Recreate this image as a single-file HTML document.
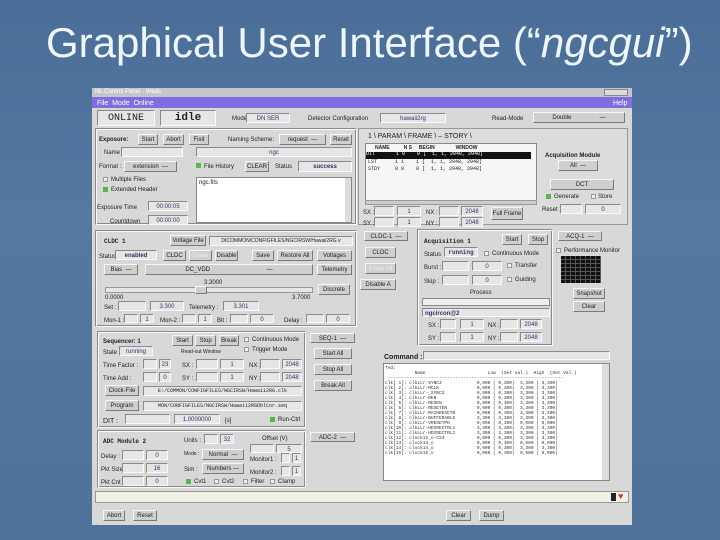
<!DOCTYPE html>
<html><head><meta charset="utf-8"><style>
*{margin:0;padding:0;box-sizing:border-box}
body{width:720px;height:540px;overflow:hidden;background:linear-gradient(180deg,#4a6e97 0%,#5478a0 40%,#4e7299 100%);font-family:"Liberation Sans",sans-serif;position:relative}
h1{position:absolute;left:46px;top:19px;color:#eef6ff;font-weight:normal;font-size:42px;letter-spacing:0px;white-space:nowrap}
#w{position:absolute;left:92px;top:88px;width:540px;height:437px;background:#d8d8d8}
#w div{position:absolute;font-size:6px;line-height:1;white-space:nowrap;color:#222}
.b{background:#cfcfcf;border:1px solid;border-color:#f6f6f6 #7a7a7a #7a7a7a #f6f6f6;text-align:center;padding-top:2px}
.f{background:#e6e6e6;border:1px solid;border-color:#8a8a8a #fafafa #fafafa #8a8a8a;text-align:center;padding-top:2px;color:#336!important}
.p{border:1px solid;border-color:#8a8a8a #fafafa #fafafa #8a8a8a;box-shadow:inset 1px 1px 0 #fafafa,inset -1px -1px 0 #8a8a8a}
.g{background:#55b84a;width:5px;height:5px}
.c{background:#eee;border:1px solid #999;width:5px;height:5px}
.mono{font-family:"Liberation Mono",monospace}
</style></head><body>
<h1>Graphical User Interface (“<i>ngcgui</i>”)</h1>
<div id="w">
<div style="left:0;top:0;width:540px;height:9px;background:#c4c6cc"></div>
<div style="left:3px;top:1px;color:#fff;font-size:6px">NL Control Panel · Weds</div>
<div style="left:512px;top:1px;width:24px;height:7px;background:#ddd;border:1px solid #888"></div>
<div style="left:0;top:9px;width:540px;height:11px;background:#7e6ee0"></div>
<div style="left:5px;top:12px;color:#fff;font-size:7px">File &nbsp;Mode &nbsp;Online</div>
<div style="left:521px;top:12px;color:#fff;font-size:7px">Help</div>
<div class="f mono" style="left:5px;top:22px;width:58px;height:16px;font-size:10px;color:#222!important;padding-top:3px">ONLINE</div>
<div class="f mono" style="left:68px;top:22px;width:56px;height:16px;font-size:11px;color:#222!important;padding-top:2px;font-weight:bold">idle</div>
<div style="left:140px;top:28px">Mode</div>
<div class="f" style="left:154px;top:25px;width:44px;height:10px">DN SER</div>
<div style="left:216px;top:28px">Detector Configuration</div>
<div class="f" style="left:288px;top:25px;width:66px;height:10px">hawaii2rg</div>
<div style="left:400px;top:28px">Read-Mode</div>
<div class="b" style="left:441px;top:24px;width:92px;height:11px">Double &nbsp; &nbsp; &nbsp; &nbsp; &nbsp; &nbsp; &nbsp; &nbsp; — </div>

<div class="p" style="left:3px;top:40px;width:262px;height:97px"></div>
<div style="left:7px;top:49px;font-weight:bold">Exposure:</div>
<div class="b" style="left:46px;top:46px;width:20px;height:11px">Start</div>
<div class="b" style="left:71px;top:46px;width:21px;height:11px">Abort</div>
<div class="b" style="left:97px;top:46px;width:20px;height:11px">Fixit</div>
<div style="left:136px;top:49px">Naming Scheme:</div>
<div class="b" style="left:187px;top:46px;width:47px;height:11px">request &nbsp;—</div>
<div class="b" style="left:238px;top:46px;width:22px;height:11px">Reset</div>
<div style="left:12px;top:62px">Name :</div>
<div class="f" style="left:29px;top:59px;width:62px;height:10px"></div>
<div class="f" style="left:104px;top:59px;width:156px;height:10px">ngc</div>
<div style="left:7px;top:76px">Format :</div>
<div class="b" style="left:32px;top:73px;width:53px;height:11px">extension &nbsp;—</div>
<div class="g" style="left:104px;top:75px"></div>
<div style="left:112px;top:76px">File History</div>
<div class="b" style="left:153px;top:73px;width:24px;height:11px">CLEAR</div>
<div style="left:183px;top:76px">Status</div>
<div class="f" style="left:206px;top:73px;width:54px;height:11px;font-weight:bold">success</div>
<div class="c" style="left:11px;top:89px"></div><div style="left:19px;top:89px">Multiple Files</div>
<div class="g" style="left:11px;top:99px"></div><div style="left:19px;top:99px">Extended Header</div>
<div style="left:5px;top:117px">Exposure Time</div>
<div class="f" style="left:56px;top:113px;width:40px;height:10px">00:00:05</div>
<div style="left:18px;top:131px">Countdown</div>
<div class="f" style="left:56px;top:127px;width:40px;height:10px">00:00:00</div>
<div style="left:104px;top:89px;width:156px;height:46px;background:#fff;border:1px solid #888"></div>
<div style="left:107px;top:92px">ngc.fits</div>
<div style="left:253px;top:90px;width:6px;height:44px;background:#ddd"></div>

<div style="left:266px;top:40px;width:270px;height:97px;background:#dcdcdc;border:1px solid #999"></div>
<div style="left:276px;top:45px;font-size:7px">1 \ PARAM \ FRAME \ – STORY \</div>
<div style="left:273px;top:55px;width:172px;height:61px;background:#f6f6f6;border:1px solid #888"></div>
<div style="left:283px;top:58px;font-size:5px;font-weight:bold">NAME &nbsp; &nbsp; &nbsp; &nbsp; &nbsp;N S &nbsp; &nbsp; BEGIN &nbsp; &nbsp; &nbsp; &nbsp; &nbsp; &nbsp; &nbsp; WINDOW</div>
<div class="mono" style="left:274px;top:64px;width:165px;height:7px;background:#111;color:#fff;font-size:5px">DIT &nbsp; &nbsp; &nbsp; 1 0 &nbsp; &nbsp;0 [ &nbsp;1, 1, 2048, 2048]</div>
<div class="mono" style="left:276px;top:72px;font-size:5px">LST &nbsp; &nbsp; &nbsp;1 1 &nbsp; &nbsp;1 [ &nbsp;1, 1, 2048, 2048]</div>
<div class="mono" style="left:276px;top:79px;font-size:5px">STDY &nbsp; &nbsp; 0 0 &nbsp; &nbsp;0 [ &nbsp;1, 1, 2048, 2048]</div>
<div style="left:273px;top:112px;width:172px;height:5px;background:#ccc;border:1px solid #999"></div>
<div style="left:271px;top:122px">SX :</div><div class="f" style="left:282px;top:118px;width:20px;height:10px"></div><div class="f" style="left:305px;top:118px;width:24px;height:10px">1</div>
<div style="left:271px;top:133px">SY :</div><div class="f" style="left:282px;top:129px;width:20px;height:10px"></div><div class="f" style="left:305px;top:129px;width:24px;height:10px">1</div>
<div style="left:334px;top:122px">NX :</div><div class="f" style="left:347px;top:118px;width:20px;height:10px"></div><div class="f" style="left:369px;top:118px;width:22px;height:10px">2048</div>
<div style="left:334px;top:133px">NY :</div><div class="f" style="left:347px;top:129px;width:20px;height:10px"></div><div class="f" style="left:369px;top:129px;width:22px;height:10px">2048</div>
<div class="b" style="left:399px;top:119px;width:32px;height:13px;padding-top:3px">Full Frame</div>
<div style="left:453px;top:65px;font-weight:bold;font-size:6px">Acquisition Module</div>
<div class="b" style="left:466px;top:72px;width:40px;height:11px">All &nbsp;—</div>
<div class="b" style="left:458px;top:91px;width:64px;height:11px">DCT</div>
<div class="g" style="left:454px;top:106px"></div><div style="left:462px;top:106px">Generate</div>
<div class="c" style="left:499px;top:106px"></div><div style="left:506px;top:106px">Store</div>
<div style="left:450px;top:119px">Reset :</div><div class="f" style="left:468px;top:116px;width:22px;height:10px"></div><div class="f" style="left:493px;top:116px;width:36px;height:10px">0</div>

<div class="p" style="left:3px;top:142px;width:262px;height:97px"></div>
<div style="left:12px;top:151px;font-weight:bold" class="mono">CLDC 1</div>
<div class="b" style="left:78px;top:147px;width:36px;height:11px">Voltage File</div>
<div class="f" style="left:117px;top:148px;width:144px;height:10px;font-size:5px;color:#222!important">DICOMMON/CONFIGFILES/NGCIRSW/Hawaii2RG.v</div>
<div style="left:7px;top:166px">Status</div>
<div class="f" style="left:23px;top:162px;width:42px;height:10px;font-weight:bold" >enabled</div>
<div class="b" style="left:71px;top:162px;width:23px;height:11px">CLDC</div>
<div class="b" style="left:97px;top:162px;width:23px;height:11px;color:#eee">Erase</div>
<div class="b" style="left:123px;top:162px;width:23px;height:11px">Disable</div>
<div class="b" style="left:160px;top:162px;width:22px;height:11px">Save</div>
<div class="b" style="left:185px;top:162px;width:36px;height:11px">Restore All</div>
<div class="b" style="left:225px;top:162px;width:35px;height:11px">Voltages</div>
<div class="b" style="left:12px;top:176px;width:34px;height:11px">Bias &nbsp;—</div>
<div class="b" style="left:53px;top:176px;width:168px;height:11px">DC_VDD &nbsp; &nbsp; &nbsp; &nbsp; &nbsp; &nbsp; &nbsp; &nbsp; &nbsp; &nbsp; &nbsp; &nbsp; &nbsp; &nbsp; &nbsp; &nbsp; &nbsp;—</div>
<div class="b" style="left:225px;top:176px;width:35px;height:11px">Telemetry</div>
<div style="left:112px;top:192px">3.3000</div>
<div style="left:13px;top:199px;width:208px;height:6px;background:#e6e6e6;border:1px solid #999"></div>
<div class="b" style="left:103px;top:198px;width:12px;height:8px"></div>
<div style="left:13px;top:207px">0.0000</div><div style="left:200px;top:207px">3.7000</div>
<div class="b" style="left:226px;top:196px;width:32px;height:11px">Discrete</div>
<div style="left:12px;top:217px">Set :</div><div class="f" style="left:26px;top:213px;width:28px;height:10px"></div><div class="f" style="left:58px;top:213px;width:34px;height:10px">3.300</div>
<div style="left:97px;top:217px">Telemetry :</div><div class="f" style="left:131px;top:213px;width:36px;height:10px">3.301</div>
<div style="left:12px;top:230px">Mon-1 :</div><div class="f" style="left:32px;top:226px;width:14px;height:9px"></div><div class="f" style="left:48px;top:226px;width:14px;height:9px">1</div>
<div style="left:68px;top:230px">Mon-2 :</div><div class="f" style="left:90px;top:226px;width:14px;height:9px"></div><div class="f" style="left:106px;top:226px;width:14px;height:9px">1</div>
<div style="left:125px;top:230px">Bit :</div><div class="f" style="left:138px;top:226px;width:18px;height:9px"></div><div class="f" style="left:158px;top:226px;width:24px;height:9px">0</div>
<div style="left:192px;top:230px">Delay :</div><div class="f" style="left:214px;top:226px;width:18px;height:9px"></div><div class="f" style="left:234px;top:226px;width:24px;height:9px">0</div>

<div class="p" style="left:5px;top:243px;width:209px;height:97px"></div>
<div style="left:11px;top:251px;font-weight:bold">Sequencer: 1</div>
<div class="b" style="left:80px;top:247px;width:21px;height:11px">Start</div>
<div class="b" style="left:103px;top:247px;width:21px;height:11px">Stop</div>
<div class="b" style="left:127px;top:247px;width:20px;height:11px">Break</div>
<div class="c" style="left:152px;top:249px"></div><div style="left:160px;top:249px">Continuous Mode</div>
<div class="c" style="left:152px;top:259px"></div><div style="left:160px;top:259px">Trigger Mode</div>
<div style="left:11px;top:262px">State</div><div class="f" style="left:27px;top:258px;width:34px;height:10px">running</div>
<div style="left:89px;top:262px;font-size:5px">Read-out Window</div>
<div style="left:11px;top:275px">Time Factor :</div><div class="f" style="left:51px;top:271px;width:14px;height:10px"></div><div class="f" style="left:67px;top:271px;width:12px;height:10px">23</div>
<div style="left:90px;top:275px">SX :</div><div class="f" style="left:104px;top:271px;width:22px;height:10px"></div><div class="f" style="left:128px;top:271px;width:24px;height:10px">1</div>
<div style="left:157px;top:275px">NX :</div><div class="f" style="left:168px;top:271px;width:20px;height:10px"></div><div class="f" style="left:190px;top:271px;width:20px;height:10px">2048</div>
<div style="left:11px;top:288px">Time Add :</div><div class="f" style="left:51px;top:284px;width:14px;height:10px"></div><div class="f" style="left:67px;top:284px;width:12px;height:10px">0</div>
<div style="left:90px;top:288px">SY :</div><div class="f" style="left:104px;top:284px;width:22px;height:10px"></div><div class="f" style="left:128px;top:284px;width:24px;height:10px">1</div>
<div style="left:157px;top:288px">NY :</div><div class="f" style="left:168px;top:284px;width:20px;height:10px"></div><div class="f" style="left:190px;top:284px;width:20px;height:10px">2048</div>
<div class="b" style="left:13px;top:297px;width:34px;height:11px">Clock-File</div>
<div class="f mono" style="left:51px;top:298px;width:159px;height:10px;font-size:5px;color:#222!important">E:/COMMON/CONFIGFILES/NGCIRSW/Hawaii2RG.clk</div>
<div class="b" style="left:13px;top:312px;width:34px;height:11px">Program</div>
<div class="f mono" style="left:51px;top:313px;width:159px;height:10px;font-size:5px;color:#222!important">MON/CONFIGFILES/NGCIRSW/Hawaii2RGDblCor.seq</div>
<div style="left:11px;top:330px;font-size:7px">DIT :</div><div class="f" style="left:33px;top:326px;width:45px;height:10px"></div><div class="f" style="left:82px;top:326px;width:46px;height:10px">1.0000000</div>
<div style="left:133px;top:330px">[s]</div>
<div class="g" style="left:178px;top:329px"></div><div style="left:186px;top:329px">Run-Ctrl</div>
<div class="b" style="left:218px;top:245px;width:45px;height:10px">SEQ-1 &nbsp;—</div>
<div class="b" style="left:222px;top:260px;width:38px;height:11px">Start All</div>
<div class="b" style="left:222px;top:276px;width:38px;height:11px">Stop All</div>
<div class="b" style="left:222px;top:292px;width:38px;height:11px">Break All</div>

<div class="p" style="left:5px;top:342px;width:209px;height:58px"></div>
<div class="mono" style="left:11px;top:351px;font-weight:bold">ADC Module 2</div>
<div style="left:92px;top:350px">Units :</div><div class="f" style="left:112px;top:346px;width:14px;height:10px"></div><div class="f" style="left:128px;top:346px;width:14px;height:10px">32</div>
<div style="left:170px;top:348px">Offset (V)</div>
<div class="f" style="left:158px;top:356px;width:24px;height:9px"></div><div class="f" style="left:184px;top:356px;width:26px;height:9px">5</div>
<div style="left:9px;top:366px">Delay :</div><div class="f" style="left:30px;top:362px;width:22px;height:10px"></div><div class="f" style="left:54px;top:362px;width:22px;height:10px">0</div>
<div style="left:92px;top:364px;font-size:5px">Mode :</div><div class="b" style="left:110px;top:361px;width:42px;height:11px">Normal &nbsp;—</div>
<div style="left:158px;top:369px">Monitor1 :</div><div class="f" style="left:189px;top:365px;width:9px;height:10px"></div><div class="f" style="left:200px;top:365px;width:9px;height:10px">1</div>
<div style="left:9px;top:379px">Pkt Size :</div><div class="f" style="left:30px;top:375px;width:22px;height:10px"></div><div class="f" style="left:54px;top:375px;width:22px;height:10px">16</div>
<div style="left:92px;top:379px">Sim :</div><div class="b" style="left:110px;top:375px;width:42px;height:11px">Numbers —</div>
<div style="left:158px;top:382px">Monitor2 :</div><div class="f" style="left:189px;top:378px;width:9px;height:10px"></div><div class="f" style="left:200px;top:378px;width:9px;height:10px">1</div>
<div style="left:9px;top:392px">Pkt Cnt :</div><div class="f" style="left:30px;top:388px;width:22px;height:10px"></div><div class="f" style="left:54px;top:388px;width:22px;height:10px">0</div>
<div class="g" style="left:94px;top:391px"></div><div style="left:102px;top:391px">Cvt1</div>
<div class="c" style="left:122px;top:391px"></div><div style="left:130px;top:391px">Cvt2</div>
<div class="c" style="left:151px;top:391px"></div><div style="left:159px;top:391px">Filter</div>
<div class="c" style="left:178px;top:391px"></div><div style="left:186px;top:391px">Clamp</div>
<div class="b" style="left:218px;top:344px;width:45px;height:10px">ADC-2 &nbsp;—</div>

<div class="b" style="left:272px;top:143px;width:44px;height:10px">CLDC-1 &nbsp;—</div>
<div class="b" style="left:273px;top:159px;width:31px;height:11px">CLDC</div>
<div class="b" style="left:273px;top:175px;width:31px;height:11px;color:#eee">Erase All</div>
<div class="b" style="left:268px;top:191px;width:36px;height:11px">Disable A</div>
<div class="p" style="left:325px;top:141px;width:136px;height:117px"></div>
<div class="mono" style="left:332px;top:151px;font-weight:bold">Acquisition 1</div>
<div class="b" style="left:410px;top:146px;width:20px;height:11px">Start</div>
<div class="b" style="left:436px;top:146px;width:20px;height:11px">Stop</div>
<div style="left:332px;top:164px">Status</div><div class="f mono" style="left:352px;top:159px;width:34px;height:10px;font-weight:bold">running</div>
<div class="c" style="left:392px;top:163px"></div><div style="left:400px;top:163px">Continuous Mode</div>
<div style="left:332px;top:177px">Burst :</div><div class="f" style="left:350px;top:173px;width:27px;height:10px"></div><div class="f" style="left:380px;top:173px;width:30px;height:10px">0</div>
<div class="c" style="left:415px;top:175px"></div><div style="left:423px;top:175px">Transfer</div>
<div style="left:332px;top:191px">Skip :</div><div class="f" style="left:350px;top:187px;width:27px;height:10px"></div><div class="f" style="left:380px;top:187px;width:30px;height:10px">0</div>
<div class="c" style="left:415px;top:189px"></div><div style="left:423px;top:189px">Guiding</div>
<div style="left:378px;top:202px;font-size:6px">Process</div>
<div style="left:330px;top:210px;width:128px;height:8px;background:#eee;border:1px solid #888"></div>
<div class="f" style="left:330px;top:220px;width:128px;height:9px;text-align:left;padding-left:2px;font-weight:bold">ngcircon@2</div>
<div style="left:336px;top:235px">SX :</div><div class="f" style="left:348px;top:231px;width:16px;height:10px"></div><div class="f" style="left:368px;top:231px;width:24px;height:10px">1</div>
<div style="left:396px;top:235px">NX :</div><div class="f" style="left:408px;top:231px;width:18px;height:10px"></div><div class="f" style="left:428px;top:231px;width:22px;height:10px">2048</div>
<div style="left:336px;top:248px">SY :</div><div class="f" style="left:348px;top:244px;width:16px;height:10px"></div><div class="f" style="left:368px;top:244px;width:24px;height:10px">1</div>
<div style="left:396px;top:248px">NY :</div><div class="f" style="left:408px;top:244px;width:18px;height:10px"></div><div class="f" style="left:428px;top:244px;width:22px;height:10px">2048</div>
<div class="b" style="left:466px;top:143px;width:44px;height:10px">ACQ-1 &nbsp;—</div>
<div class="c" style="left:464px;top:160px"></div><div style="left:472px;top:160px">Performance Monitor</div>
<div style="left:469px;top:168px;width:40px;height:27px;background:#111;background-image:repeating-linear-gradient(90deg,transparent 0 4px,#555 4px 5px),repeating-linear-gradient(0deg,transparent 0 3px,#555 3px 4px)"></div>
<div class="b" style="left:481px;top:200px;width:32px;height:11px">Snapshot</div>
<div class="b" style="left:481px;top:213px;width:32px;height:11px">Clear</div>

<div style="left:292px;top:266px;font-size:7px;font-weight:bold">Command :</div>
<div class="f" style="left:331px;top:263px;width:187px;height:9px"></div>
<div style="left:291px;top:275px;width:227px;height:118px;background:#fff;border:1px solid #888"></div>
<div class="mono" style="left:293px;top:278px;font-size:4.5px;line-height:5px;white-space:pre;color:#333">Ted;
           Name                       Low  (Set val.)  High  (Set Val.)
 -----------------------------------------------------------------
clk[ 1]: clkLLr-SYNC3             0,000 ( 0,300)  3,300 ( 3,300)
clk[ 2]: clkLLr-MCLK              0,000 ( 0,300)  3,300 ( 3,300)
clk[ 3]: clkLLr-_SYNC3            0,000 ( 0,300)  3,300 ( 3,300)
clk[ 4]: clkLLr-REN               0,000 ( 0,300)  3,300 ( 3,300)
clk[ 5]: clkLLr-RESEN             0,000 ( 0,300)  3,300 ( 3,300)
clk[ 6]: clkLLr-RESETEN           0,000 ( 0,300)  3,300 ( 3,300)
clk[ 7]: clkLLr-MAINRESETB        0,000 ( 0,300)  3,300 ( 3,300)
clk[ 8]: clkLLr-BUFFERABLE        3,300 ( 3,300)  3,300 ( 3,300)
clk[ 9]: clkLLr-VRESETPD          0,000 ( 0,300)  0,000 ( 0,000)
clk[10]: clkLLr-HDIRECTRL1        3,300 ( 3,300)  3,300 ( 3,300)
clk[11]: clkLLr-HDIRECTRL2        3,300 ( 3,300)  3,300 ( 3,300)
clk[12]: clock12_o-CS3            0,000 ( 0,300)  3,300 ( 3,300)
clk[13]: clock13_o                0,000 ( 0,300)  0,000 ( 0,000)
clk[14]: clock14_o                0,000 ( 0,300)  3,300 ( 3,300)
clk[15]: clock15_o                0,000 ( 0,300)  0,000 ( 0,000)</div>
<div style="left:510px;top:276px;width:7px;height:116px;background:#ddd"></div>

<div style="left:3px;top:403px;width:534px;height:12px;background:#f2f0e2;border:1px solid #999"></div>
<div style="left:519px;top:405px;width:5px;height:8px;background:#223"></div>
<div style="left:526px;top:404px;color:#c33;font-size:9px">♥</div>
<div class="b" style="left:11px;top:422px;width:22px;height:11px">Abort</div>
<div class="b" style="left:41px;top:422px;width:24px;height:11px">Reset</div>
<div class="b" style="left:354px;top:422px;width:25px;height:11px">Clear</div>
<div class="b" style="left:387px;top:422px;width:25px;height:11px">Dump</div>
</div>
</body></html>
